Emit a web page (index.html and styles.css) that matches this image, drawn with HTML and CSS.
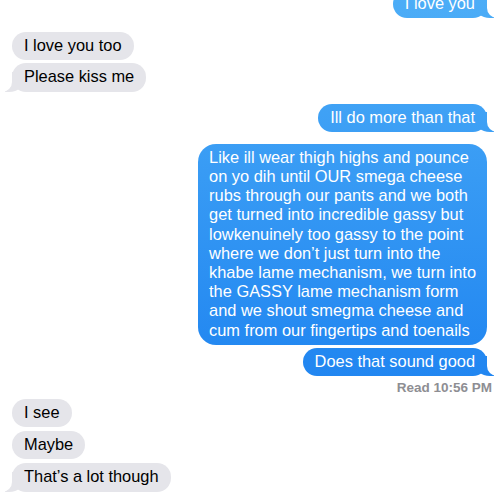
FILE: index.html
```html
<!DOCTYPE html>
<html>
<head>
<meta charset="utf-8">
<link rel="stylesheet" href="styles.css">
</head>
<body>
<div class="thread">
  <div class="bubble out tail">I love you</div>
  <div class="bubble in gap-14">I love you too</div>
  <div class="bubble in tail gap-3">Please kiss me</div>
  <div class="bubble out tail gap-12">Ill do more than that</div>
  <div class="bubble out big gap-12">Like ill wear thigh highs and pounce<br>on yo dih until OUR smega cheese<br>rubs through our pants and we both<br>get turned into incredible gassy but<br>lowkenuinely too gassy to the point<br>where we don’t just turn into the<br>khabe lame mechanism, we turn into<br>the GASSY lame mechanism form<br>and we shout smegma cheese and<br>cum from our fingertips and toenails</div>
  <div class="bubble out tail gap-3">Does that sound good</div>
  <div class="receipt">Read 10:56 PM</div>
  <div class="bubble in gap-3">I see</div>
  <div class="bubble in gap-4">Maybe</div>
  <div class="bubble in tail gap-4">That’s a lot though</div>
</div>
</body>
</html>
```
FILE: styles.css
```css
html, body {
  margin: 0;
  background: #fff;
  overflow: hidden;
}
body {
  font-family: "Helvetica Neue", "Liberation Sans", Arial, sans-serif;
}
.thread {
  display: flex;
  flex-direction: column;
  margin-top: -10px;
  padding: 0 13px 0 12px;
}
.bubble {
  position: relative;
  z-index: 0;
  font-size: 16.4px;
  line-height: 19.2px;
  padding: 4px 12px 5px;
  border-radius: 14px;
  white-space: nowrap;
}
.in {
  align-self: flex-start;
  background: #e5e5ea;
  color: #000;
}
.out {
  align-self: flex-end;
  color: #fff;
  background: linear-gradient(#4cadf7, #2388f1 70%, #1b7def) fixed;
}
.big {
  border-radius: 18px;
  padding: 4px 11px 5px;
}
.tail::before,
.tail::after {
  content: "";
  position: absolute;
  bottom: 0;
  height: 20px;
  z-index: -1;
}
.out.tail::before {
  right: -7px;
  width: 20px;
  background: inherit;
  border-bottom-left-radius: 16px 14px;
}
.out.tail::after {
  right: -26px;
  width: 26px;
  background: #fff;
  border-bottom-left-radius: 10px;
}
.in.tail::before {
  left: -7px;
  width: 20px;
  background: #e5e5ea;
  border-bottom-right-radius: 16px 14px;
}
.in.tail::after {
  left: -26px;
  width: 26px;
  background: #fff;
  border-bottom-right-radius: 10px;
}
.receipt {
  align-self: flex-end;
  margin: 4px -5px 0 0;
  font-size: 13.5px;
  line-height: 16px;
  font-weight: 700;
  color: #8e8e93;
}
.gap-3 { margin-top: 3px; }
.gap-4 { margin-top: 4px; }
.gap-12 { margin-top: 12px; }
.gap-14 { margin-top: 14px; }
```
